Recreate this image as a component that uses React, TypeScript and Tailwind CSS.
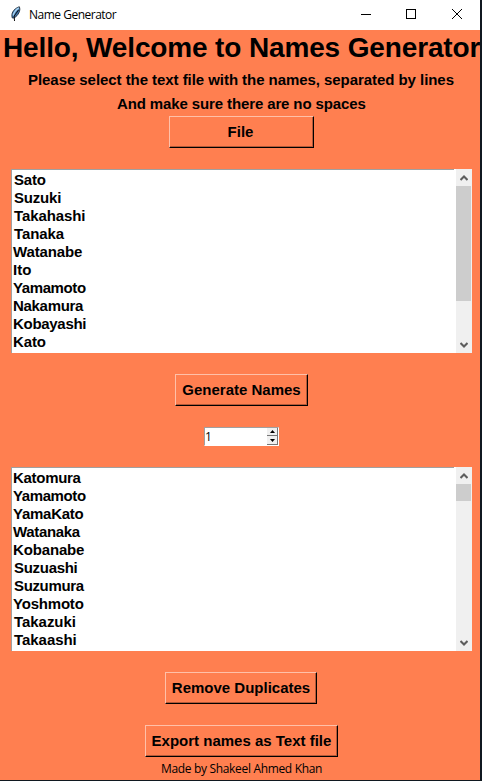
import React from "react";

const SANS = "font-['Liberation_Sans',Arial,sans-serif] font-bold text-[15px]";
const UI = "font-['Open_Sans','Noto_Sans',sans-serif]";

type Name = [text: string, spacing: string];

const sourceNames: Name[] = [
  ["Sato", "pl-px tracking-[-0.2px]"],
  ["Suzuki", "pl-px tracking-[-0.2px]"],
  ["Takahashi", "pl-px tracking-[-0.1px]"],
  ["Tanaka", "pl-px tracking-[-0.1px]"],
  ["Watanabe", "tracking-[-0.15px]"],
  ["Ito", ""],
  ["Yamamoto", "tracking-[-0.4px]"],
  ["Nakamura", "tracking-[-0.3px]"],
  ["Kobayashi", "tracking-[-0.3px]"],
  ["Kato", "tracking-[-0.1px]"],
];
const generatedNames: Name[] = [
  ["Katomura", "tracking-[-0.3px]"],
  ["Yamamoto", "tracking-[-0.4px]"],
  ["YamaKato", "tracking-[-0.25px]"],
  ["Watanaka", "tracking-[-0.35px]"],
  ["Kobanabe", "tracking-[-0.15px]"],
  ["Suzuashi", "pl-px tracking-[-0.3px]"],
  ["Suzumura", "pl-px tracking-[-0.35px]"],
  ["Yoshmoto", "tracking-[-0.2px]"],
  ["Takazuki", "pl-px tracking-[-0.05px]"],
  ["Takaashi", "pl-px tracking-[-0.05px]"],
];

function Feather() {
  return (
    <svg width="12" height="16" viewBox="0 0 12 16" className="ml-[10px]">
      <path d="M2.3 12 C.8 8 3 3 9.3 .7 C11 4 8.5 9.5 4 12 Z" fill="#3f75ab" stroke="#17212b" strokeWidth=".8" />
      <path d="M3.2 9.5 C4 6 6 3.5 8.8 1.8" stroke="#a7d3f2" strokeWidth="1.5" fill="none" />
      <path d="M8.5 4 L4.2 10 L4.5 15" stroke="#111" strokeWidth="1" fill="none" />
    </svg>
  );
}

function Chevron({ down = false }: { down?: boolean }) {
  return (
    <svg width="8" height="6" viewBox="0 0 8 6" className={down ? "rotate-180" : ""}>
      <path d="M.5 5.1 L4 1.6 L7.5 5.1" fill="none" stroke="#5d5d5d" strokeWidth="2.1" />
    </svg>
  );
}

function NameList({ names, thumb }: { names: Name[]; thumb: string }) {
  return (
    <div className="ml-[11px] flex h-[184px] w-[461px] bg-white">
      <div className="h-full w-[443px] border-l border-t border-[#a0a0a0] pl-px pt-px">
        {names.map(([name, spacing]) => (
          <div key={name} className={`${SANS} h-[18px] leading-[18px] text-black ${spacing}`}>{name}</div>
        ))}
      </div>
      <div className="ml-[2px] flex h-full w-[16px] flex-col bg-[#f0f0f0]">
        <div className="flex h-[17px] shrink-0 items-center justify-center pr-px pt-px"><Chevron /></div>
        <div className={`w-[15px] bg-[#cdcdcd] ${thumb}`} />
        <div className="mt-auto flex h-[17px] items-center justify-center pr-px"><Chevron down /></div>
      </div>
    </div>
  );
}

function RaisedButton({ label, className }: { label: string; className: string }) {
  return (
    <button
      className={`${SANS} mx-auto block h-[32px] whitespace-nowrap border border-b-black border-l-[#ffc0a9] border-r-black border-t-[#ffc0a9] p-0 text-center leading-[30px] text-black shadow-[inset_-1px_-1px_0_#b35938] ${className}`}
    >
      {label}
    </button>
  );
}

export default function App() {
  return (
    <div className="flex h-[781px] w-[482px] overflow-hidden bg-[#101820]">
      <div className="flex h-[780px] w-[480px] shrink-0 flex-col overflow-hidden bg-[#ff7f50]">
        <header className="flex h-[30px] shrink-0 items-center bg-white pb-[3px]">
          <Feather />
          <span className={`${UI} ml-[7px] mt-[3px] text-[12px] tracking-[-0.5px] text-black`}>Name Generator</span>
          <svg width="104" height="12" viewBox="0 0 104 12" className="ml-auto mr-[15px]" fill="none" stroke="#000">
            <path d="M0 6.5H10" />
            <rect x="45.5" y="1.5" width="9" height="9" />
            <path d="M91 1L101 11M101 1L91 11" />
          </svg>
        </header>
        <h1 className="h-[38px] whitespace-nowrap pl-[3px] font-['Liberation_Sans',Arial,sans-serif] text-[28px] font-bold leading-[36px] tracking-[-0.14px] text-black">Hello, Welcome to Names Generator</h1>
        <p className={`${SANS} h-[24px] whitespace-nowrap pl-[28px] leading-[24px] tracking-[-0.055px] text-black`}>Please select the text file with the names, separated by lines</p>
        <p className={`${SANS} h-[24px] whitespace-nowrap pl-[117px] leading-[24px] tracking-[-0.12px] text-black`}>And make sure there are no spaces</p>
        <div className="flex h-[32px] pl-[2px]"><RaisedButton label="File" className="w-[145px] pr-px" /></div>
        <div className="mt-[21px]"><NameList names={sourceNames} thumb="h-[115px]" /></div>
        <div className="mt-[21px] flex pl-[3px]"><RaisedButton label="Generate Names" className="w-[133px]" /></div>
        <div className="ml-[204px] mt-[21px] flex h-[19px] w-[75px] border border-b-white border-l-[#a0a0a0] border-r-white border-t-[#a0a0a0] bg-white">
          <span className={`${UI} flex-1 text-[12px] leading-[18px] text-black`}>1</span>
          <div className="flex w-[11px] flex-col">
            <div className="flex h-[8px] items-center justify-center border-b border-r border-[#777] bg-[#f0f0f0]">
              <svg width="5" height="3" viewBox="0 0 5 3"><path d="M0 3L2.5 0L5 3Z" /></svg>
            </div>
            <div className="flex h-[9px] items-center justify-center border-b border-r border-[#777] bg-[#f0f0f0]">
              <svg width="5" height="3" viewBox="0 0 5 3"><path d="M0 0L2.5 3L5 0Z" /></svg>
            </div>
          </div>
        </div>
        <div className="mt-[21px]"><NameList names={generatedNames} thumb="h-[17px]" /></div>
        <div className="mt-[21px] flex pl-[2px]"><RaisedButton label="Remove Duplicates" className="w-[152px]" /></div>
        <div className="mt-[21px] flex pl-[3px]"><RaisedButton label="Export names as Text file" className="w-[193px]" /></div>
        <footer className={`${UI} h-[23px] whitespace-nowrap pl-[161px] text-[12px] leading-[23px] tracking-[-0.33px] text-black`}>Made by Shakeel Ahmed Khan</footer>
      </div>
    </div>
  );
}
